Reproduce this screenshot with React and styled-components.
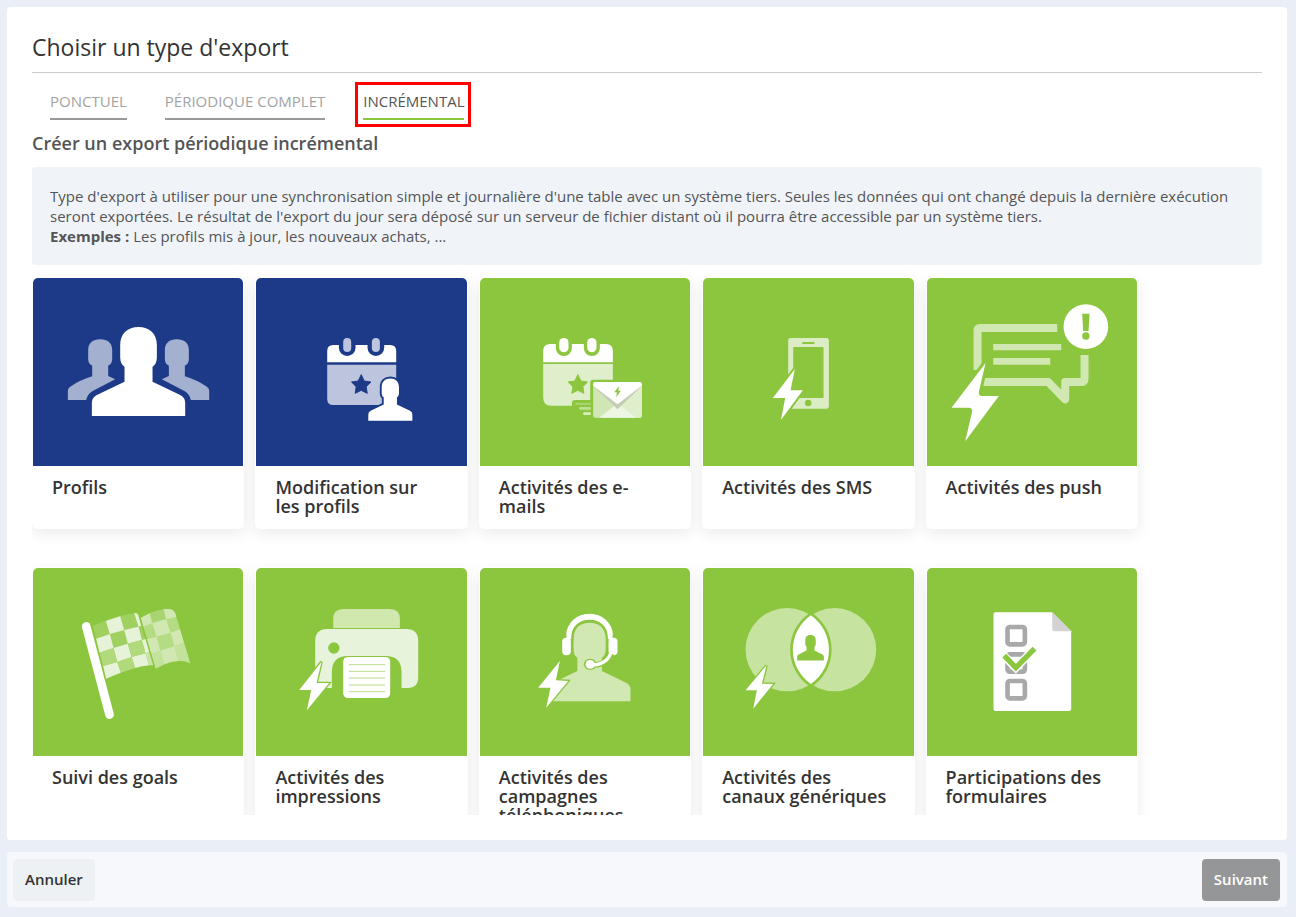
import { useState } from "react";
import styled, { createGlobalStyle } from "styled-components";

const BLUE = "#1c3a87";
const GREEN = "#8cc63f";

const PERSON =
  "M283 290C275 286 270 276 270 262V226C270 190 292 171 325 171S380 190 380 226V262C380 276 375 286 367 290V335L450 375Q465 383 465 398V438H185V398Q185 383 200 375L283 335Z";
const SIDE_PERSON =
  "M186 287Q174 282 174 268V240C174 219 188 208 210 208S246 219 246 240V268Q246 282 234 287V318L255 328L186 364Q171 374 168 390H113V362Q113 355 120 350Q150 330 186 319Z";
const STAR =
  "M333 314L342 333L362 336L348 350L351 370L333 361L315 370L318 350L304 336L324 333Z";

const Bolt = ({ points, gap = 8 }) => (
  <polygon points={points} fill="#fff" stroke={GREEN} strokeWidth={gap} paintOrder="stroke" />
);

const ProfilesIcon = () => (
  <Drawing viewBox="9 24 630 564">
    <path d={SIDE_PERSON} fill="#a4b0cf" />
    <path d={SIDE_PERSON} fill="#a4b0cf" transform="translate(650 0) scale(-1 1)" />
    <path d={PERSON} fill="#fff" />
  </Drawing>
);

const ProfileChangesIcon = () => (
  <Drawing viewBox="18 24 630 564">
    <path d="M231 277V243Q231 225 249 225H420Q438 225 438 243V277Z" fill="#fff" />
    <path d="M231 284H438V387Q438 405 420 405H249Q231 405 231 387Z" fill="#bdc5de" />
    {[291, 377].map((x) => (
      <g key={x}>
        <rect x={x - 25} y="194" width="50" height="64" rx="25" fill={BLUE} />
        <rect x={x - 12} y="204" width="24" height="42" rx="12" fill="#bdc5de" />
      </g>
    ))}
    <path d={STAR} fill={BLUE} stroke={BLUE} strokeWidth="3" strokeLinejoin="round" />
    <path
      d={PERSON}
      fill="#fff"
      stroke={BLUE}
      strokeWidth="24"
      paintOrder="stroke"
      transform="translate(267 244) scale(.472 .476)"
    />
  </Drawing>
);

const EmailIcon = () => (
  <Drawing viewBox="15 24 630 564">
    <path d="M204 277V243Q204 222 225 222H392Q413 222 413 243V277Z" fill="#fff" />
    <path d="M204 282H413V407H228Q204 407 204 383Z" fill="#dfeecb" />
    {[266, 350].map((x) => (
      <g key={x}>
        <rect x={x - 24} y="194" width="48" height="64" rx="24" fill={GREEN} />
        <rect x={x - 14} y="204" width="28" height="43" rx="14" fill="#fff" />
      </g>
    ))}
    <path d={STAR} transform="translate(-25 0)" fill={GREEN} stroke={GREEN} strokeWidth="3" strokeLinejoin="round" />
    <path d="M345 338Q345 329 354 329H420V420H290V400Q290 390 300 390H345Z" fill={GREEN} />
    <rect x="300" y="398" width="47" height="7" rx="3" fill="#a8d46b" />
    <rect x="312" y="411" width="35" height="8" rx="3" fill="#c0df95" />
    <rect x="324" y="427" width="23" height="8" rx="3" fill="#d9ecbf" />
    <rect x="354" y="336" width="146" height="107" rx="6" fill="#d0e6b4" />
    <path d="M427 412L500 345V437Q500 443 494 443H427Z" fill="#dfeecb" />
    <path d="M372 443L427 400L483 443Z" fill="#edf6e2" />
    <path d="M354 348L427 418L500 348V342H354Z" fill="#c3cdb5" />
    <path d="M354 342Q354 336 360 336H494Q500 336 500 342V347L427 403L354 347Z" fill="#fff" />
    <polygon points="432,348 417,367 425,367 423,382 437,362 429,362" fill={GREEN} />
  </Drawing>
);

const SmsIcon = () => (
  <Drawing viewBox="9 24 630 564">
    <rect x="264" y="204" width="122" height="212" rx="7" fill="#dcedc5" />
    <rect x="279" y="231" width="91" height="153" rx="3" fill={GREEN} />
    <rect x="306" y="216" width="37" height="6" rx="2" fill={GREEN} />
    <circle cx="324" cy="399" r="10" fill={GREEN} />
    <Bolt points="284,297 218,384 255,384 242,450 308,361 271,361" gap={12} />
  </Drawing>
);

const PushIcon = () => (
  <Drawing viewBox="21 24 630 564">
    <g fill="none" stroke="#d1e8b3" strokeWidth="24" strokeLinejoin="round">
      <path d="M411 174H180Q172 174 172 182V300" />
      <path d="M180 336H384L435 388V336H482Q493 336 493 326V255" />
    </g>
    <path d="M219 222H423V241H219ZM219 264H390V284H219Z" fill="#d1e8b3" />
    <path
      d="M196 279L94 413H146Q156 413 156 424L135 514L236 378H186Q174 378 176 366Z"
      fill="#fff"
      stroke={GREEN}
      strokeWidth="18"
      paintOrder="stroke"
    />
    <circle cx="497" cy="170" r="67" fill="#fff" />
    <path d="M486 131H508L505 183H489Z" fill={GREEN} />
    <circle cx="497" cy="198" r="11" fill={GREEN} />
  </Drawing>
);

const GoalsIcon = () => (
  <Drawing viewBox="9 24 630 564">
    <path d="M188 198Q250 168 312 159Q322 157 325 168L370 316Q300 318 228 356Z" fill="#a0d05f" />
    <path d="M198 236L239 222L250 264L208 278Z" fill="#e6f3d8" />
    <path d="M227 183L270 169L282 210L239 222Z" fill="#e6f3d8" />
    <path d="M282 210L325 200L335 240L293 251Z" fill="#e6f3d8" />
    <path d="M250 264L293 251L304 291L261 306Z" fill="#e6f3d8" />
    <path d="M219 318L261 306L272 338Q250 346 228 356Z" fill="#e6f3d8" />
    <path d="M304 291L346 280L356 316Q334 318 315 324Z" fill="#e6f3d8" />
    <path d="M312 159Q322 157 325 168L333 197L325 200ZM335 240L346 237L358 276L346 280Z" fill="#e6f3d8" />
    <path d="M208 278L250 264L261 306L219 318ZM293 251L335 240L346 280L304 291ZM261 306L304 291L315 324L272 338Z" fill="#b1da7d" />
    <path d="M346 280L358 276L370 316H356Z" fill="#c9e5a6" />
    <path d="M331 174Q374 150 412 147Q430 147 435 160L480 310Q440 290 376 326Z" fill="#b4dc82" />
    <path d="M358 160Q380 151 400 148L408 178L366 186Z" fill="#a8d56f" />
    <path d="M331 174L358 160L366 190L340 200ZM400 148Q430 144 435 160L438 170L408 178Z" fill="#d1e8b3" />
    <path d="M366 190L408 178L421 218L379 230Z" fill="#d1e8b3" />
    <path d="M350 238L379 230L390 272L363 281ZM421 218L449 208L461 248L433 258Z" fill="#d1e8b3" />
    <path d="M390 272L433 258L444 302Q422 303 402 312Z" fill="#d1e8b3" />
    <path d="M433 258L461 248L480 310Q465 300 444 302ZM363 281L390 272L402 312L376 326Z" fill="#c3e29c" />
    <path d="M329 172L374 326" stroke={GREEN} strokeWidth="4" />
    <path d="M168 199L238 464" stroke="#fff" strokeWidth="26" strokeLinecap="round" />
  </Drawing>
);

const PrinterIcon = () => (
  <Drawing viewBox="18 24 630 564">
    <path d="M249 204V177Q249 147 279 147H419Q449 147 449 177V204Z" fill="#d0e7ae" />
    <path
      d="M195 384V243Q195 207 231 207H468Q504 207 504 243V352Q504 384 472 384H454V336Q454 288 406 288H293Q245 288 245 336V384Z"
      fill="#e7f3da"
    />
    <circle cx="251" cy="264" r="17" fill={GREEN} />
    <rect x="279" y="291" width="141" height="123" rx="14" fill="#fff" stroke={GREEN} strokeWidth="6" paintOrder="stroke" />
    <path d="M296 314H405M296 334H405M296 354H405M296 375H405M296 395H405" stroke="#b9dc8b" strokeWidth="3" />
    <Bolt points="214,305 147,390 183,390 170,451 237,369 199,369" />
  </Drawing>
);

const PhoneCampaignIcon = () => (
  <Drawing viewBox="15 24 630 564">
    <path d={PERSON} fill="#d1e8b3" transform="translate(59 38) scale(.875 .88)" />
    <path d="M281 238V230A62 60 0 0 1 405 230V238" fill="none" stroke="#fff" strokeWidth="14" />
    <path d="M273 226A70 65 0 0 1 413 226H398A55 47 0 0 0 288 226Z" fill="#fff" />
    <rect x="261" y="233" width="26" height="53" rx="12" fill="#fff" />
    <rect x="400" y="233" width="27" height="53" rx="12" fill="#fff" />
    <ellipse cx="345" cy="313" rx="19" ry="17" fill={GREEN} />
    <path d="M407 280Q396 313 356 315" fill="none" stroke={GREEN} strokeWidth="17" />
    <path d="M407 278Q396 313 350 315" fill="none" stroke="#fff" strokeWidth="10" />
    <ellipse cx="345" cy="313" rx="14" ry="13" fill="#fff" />
    <Bolt points="254,303 189,383 226,383 213,443 279,363 242,361" />
  </Drawing>
);

const ChannelsIcon = () => (
  <Drawing viewBox="9 24 630 564">
    <circle cx="261" cy="269" r="125" fill="#c6e3a0" />
    <circle cx="403" cy="269" r="125" fill="#c6e3a0" />
    <path
      d="M332 166A125 125 0 0 1 332 372A125 125 0 0 1 332 166Z"
      fill="#fff"
      stroke={GREEN}
      strokeWidth="16"
      paintOrder="stroke"
    />
    <path d={PERSON} fill={GREEN} transform="translate(238 176) scale(.286)" />
    <Bolt points="199,316 136,391 170,391 159,446 219,372 185,371" />
  </Drawing>
);

const FormIcon = () => (
  <Drawing viewBox="21 24 630 564">
    <path d="M226 157H396L453 214V446Q453 453 446 453H226Q220 453 220 447V163Q220 157 226 157Z" fill="#fff" />
    <path d="M396 157V206Q396 214 404 214H453Z" fill="#d3d3d3" />
    {[201, 283, 363].map((y) => (
      <rect key={y} x="262" y={y} width="52" height="52" rx="7" fill="none" stroke="#a9a9a9" strokeWidth="14" />
    ))}
    <path d="M248 284L287 324L347 262" fill="none" stroke="#fff" strokeWidth="24" />
    <path d="M252 287L287 323L343 266" fill="none" stroke={GREEN} strokeWidth="16" />
  </Drawing>
);

const tabs = ["Ponctuel", "Périodique complet", "Incrémental"];

const exportTypes = [
  { title: "Profils", color: BLUE, Icon: ProfilesIcon },
  { title: "Modification sur les profils", color: BLUE, Icon: ProfileChangesIcon },
  { title: "Activités des e-mails", color: GREEN, Icon: EmailIcon },
  { title: "Activités des SMS", color: GREEN, Icon: SmsIcon },
  { title: "Activités des push", color: GREEN, Icon: PushIcon },
  { title: "Suivi des goals", color: GREEN, Icon: GoalsIcon },
  { title: "Activités des impressions", color: GREEN, Icon: PrinterIcon },
  { title: "Activités des campagnes téléphoniques", color: GREEN, Icon: PhoneCampaignIcon },
  { title: "Activités des canaux génériques", color: GREEN, Icon: ChannelsIcon },
  { title: "Participations des formulaires", color: GREEN, Icon: FormIcon },
];

const App = () => {
  const [activeTab, setActiveTab] = useState("Incrémental");

  return (
    <Page>
      <GlobalStyle />
      <Panel>
        <Title>Choisir un type d'export</Title>
        <Tabs>
          {tabs.map((tab) => (
            <Tab key={tab} type="button" $active={tab === activeTab} onClick={() => setActiveTab(tab)}>
              {tab}
            </Tab>
          ))}
        </Tabs>
        <Subtitle>Créer un export périodique incrémental</Subtitle>
        <Info>
          Type d'export à utiliser pour une synchronisation simple et journalière d'une table avec un
          système tiers. Seules les données qui ont changé depuis la dernière exécution seront
          exportées. Le résultat de l'export du jour sera déposé sur un serveur de fichier distant où
          il pourra être accessible par un système tiers.
          <br />
          <strong>Exemples :</strong> Les profils mis à jour, les nouveaux achats, ...
        </Info>
        <Scroller>
          <Grid>
            {exportTypes.map(({ title, color, Icon }) => (
              <Card key={title} type="button">
                <Cover $color={color}>
                  <Icon />
                </Cover>
                <CardTitle>{title}</CardTitle>
              </Card>
            ))}
          </Grid>
        </Scroller>
      </Panel>
      <Footer>
        <Button type="button">Annuler</Button>
        <Button type="button" $primary>
          Suivant
        </Button>
      </Footer>
    </Page>
  );
};

const GlobalStyle = createGlobalStyle`
  * {
    box-sizing: border-box;
  }
  body {
    margin: 0;
    background-color: #eaeff7;
    color: #555;
    font-family: "Open Sans", "Noto Sans", sans-serif;
  }
  button {
    font-family: inherit;
    border: none;
    cursor: pointer;
  }
`;
const Page = styled.div`
  display: flex;
  flex-direction: column;
  gap: 12px;
  height: 100vh;
  padding: 7px 9px 10px 7px;
`;
const Panel = styled.main`
  flex: 1;
  min-height: 0;
  display: flex;
  flex-direction: column;
  padding: 25px;
  border-radius: 4px;
  background-color: #fff;
`;
const Title = styled.h1`
  margin: 0;
  padding-bottom: 10px;
  border-bottom: 1px solid #ccc;
  color: #333;
  font-size: 23px;
  font-weight: 400;
  line-height: 30px;
`;
const Tabs = styled.nav`
  display: flex;
  gap: 38px;
  padding: 18px 18px 11px;
`;
const Tab = styled.button`
  position: relative;
  padding: 0 0 7px;
  border-bottom: 2px solid ${({ $active }) => ($active ? GREEN : "#999")};
  background: none;
  color: ${({ $active }) => ($active ? "#555" : "#a3a3a3")};
  font-size: 15px;
  font-weight: 400;
  line-height: 20px;
  text-transform: uppercase;
  &::after {
    content: "";
    display: ${({ $active }) => ($active ? "block" : "none")};
    position: absolute;
    inset: -9px -7px -9px -8px;
    border: 3px solid #f00;
  }
`;
const Subtitle = styled.h2`
  margin: 0 0 12px;
  font-size: 18px;
  font-weight: 600;
  line-height: 24px;
`;
const Info = styled.p`
  margin: 0;
  padding: 19px 18px;
  border-radius: 4px;
  background-color: #f0f4f9;
  font-size: 15px;
  line-height: 20px;
`;
const Scroller = styled.div`
  flex: 1;
  min-height: 0;
  padding-top: 12px;
  overflow-y: auto;
  scrollbar-width: none;
`;
const Grid = styled.div`
  display: grid;
  grid-template-columns: repeat(5, 1fr);
  gap: 38px 11px;
  width: calc(90% - 1px);
  padding-bottom: 38px;
`;
const Card = styled.button`
  display: flex;
  flex-direction: column;
  min-height: 252px;
  padding: 1px;
  border-radius: 5px;
  background-color: #fff;
  box-shadow: 0 5px 15px rgba(0, 0, 0, 0.08);
  text-align: left;
`;
const Cover = styled.div`
  width: 100%;
  height: 188px;
  border-radius: 5px 5px 0 0;
  background-color: ${({ $color }) => $color};
`;
const Drawing = styled.svg`
  display: block;
  width: 100%;
  height: 100%;
`;
const CardTitle = styled.span`
  padding: 12px 24px 12px 19px;
  color: #333;
  font-size: 18px;
  font-weight: 600;
  line-height: 19px;
`;
const Footer = styled.footer`
  display: flex;
  justify-content: space-between;
  padding: 7px 7px 6px 6px;
  border-radius: 4px;
  background-color: #f6f8fc;
`;
const Button = styled.button`
  height: 42px;
  padding: 0 12px 2px;
  border-radius: 4px;
  background-color: ${({ $primary }) => ($primary ? "#959698" : "#edf1f4")};
  color: ${({ $primary }) => ($primary ? "#fff" : "#333")};
  font-size: 15px;
  font-weight: 600;
`;

export default App;
